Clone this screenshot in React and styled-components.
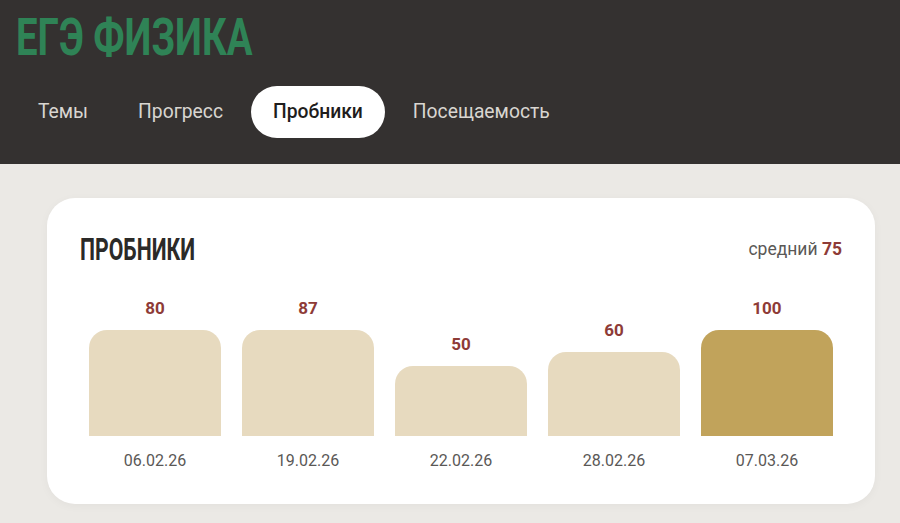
import React, { useState } from 'react';
import styled, { createGlobalStyle } from 'styled-components';

const GlobalStyle = createGlobalStyle`
  * { box-sizing: border-box; }
  body {
    margin: 0;
    background: #ebe9e5;
    font-family: Roboto, "Noto Sans", sans-serif;
  }
`;

const Header = styled.header`
  background: #343130;
  padding: 12px 16px 26px;
`;

const Logo = styled.h1`
  margin: 0;
  font-family: Roboto, sans-serif;
  font-weight: 700;
  font-size: 52px;
  line-height: 52px;
  color: #2f8356;
  display: inline-block;
  transform: scaleX(0.737);
  transform-origin: left center;
  white-space: nowrap;
`;

const Nav = styled.nav`
  display: flex;
  gap: 6px;
  margin-top: 22px;
`;

const Tab = styled.button`
  border: none;
  background: ${(p) => (p.$active ? '#ffffff' : 'transparent')};
  color: ${(p) => (p.$active ? '#1f1d1c' : '#d9d6d1')};
  font-family: Roboto, sans-serif;
  font-size: 19.3px;
  font-weight: ${(p) => (p.$active ? 500 : 400)};
  line-height: 24px;
  padding: 14px 22px;
  border-radius: 26px;
  cursor: pointer;
`;

const Main = styled.main`
  padding: 34px 25px 20px 47px;
`;

const Card = styled.section`
  background: #ffffff;
  border-radius: 28px;
  padding: 37px 33px 33px;
  box-shadow: 0 2px 10px rgba(0, 0, 0, 0.04);
`;

const CardHead = styled.div`
  display: flex;
  justify-content: space-between;
  align-items: center;
  height: 30px;
`;

const CardTitle = styled.h2`
  margin: 0;
  font-family: Roboto, sans-serif;
  font-weight: 700;
  font-size: 31px;
  line-height: 30px;
  color: #2b2a28;
  display: inline-block;
  transform: scaleX(0.685);
  transform-origin: left center;
  white-space: nowrap;
`;

const Average = styled.div`
  font-size: 17.5px;
  color: #5a5856;
  margin-top: -2px;

  b {
    color: #8e3b37;
    font-weight: 700;
  }
`;

const Chart = styled.div`
  display: grid;
  grid-template-columns: repeat(5, 1fr);
  gap: 21px;
  padding: 0 9px;
  margin-top: 33px;
`;

const Column = styled.div`
  display: flex;
  flex-direction: column;
  align-items: stretch;
`;

const BarArea = styled.div`
  height: 138px;
  display: flex;
  flex-direction: column;
  justify-content: flex-end;
`;

const Value = styled.div`
  text-align: center;
  font-size: 17px;
  font-weight: 700;
  line-height: 20px;
  color: #8e3b37;
  margin-bottom: 12px;
`;

const Bar = styled.div`
  background: ${(p) => (p.$best ? '#c1a35b' : '#e7dabf')};
  border-radius: 18px 18px 0 0;
`;

const DateLabel = styled.div`
  margin-top: 15px;
  text-align: center;
  font-size: 16px;
  line-height: 20px;
  color: #5a5856;
`;

const tabs = ['Темы', 'Прогресс', 'Пробники', 'Посещаемость'];

const tests = [
  { date: '06.02.26', score: 80 },
  { date: '19.02.26', score: 87 },
  { date: '22.02.26', score: 50 },
  { date: '28.02.26', score: 60 },
  { date: '07.03.26', score: 100 },
];

const App = () => {
  const [tab, setTab] = useState('Пробники');
  const best = Math.max(...tests.map((t) => t.score));
  const avg = Math.round(tests.reduce((s, t) => s + t.score, 0) / tests.length);

  return (
    <>
      <GlobalStyle />
      <Header>
        <Logo>ЕГЭ ФИЗИКА</Logo>
        <Nav>
          {tabs.map((t) => (
            <Tab key={t} $active={t === tab} onClick={() => setTab(t)}>
              {t}
            </Tab>
          ))}
        </Nav>
      </Header>
      <Main>
        <Card>
          <CardHead>
            <CardTitle>ПРОБНИКИ</CardTitle>
            <Average>
              средний <b>{avg}</b>
            </Average>
          </CardHead>
          <Chart>
            {tests.map((t) => (
              <Column key={t.date}>
                <BarArea>
                  <Value>{t.score}</Value>
                  <Bar $best={t.score === best} style={{ height: Math.min(t.score * 1.4, 107) }} />
                </BarArea>
                <DateLabel>{t.date}</DateLabel>
              </Column>
            ))}
          </Chart>
        </Card>
      </Main>
    </>
  );
};

export default App;
